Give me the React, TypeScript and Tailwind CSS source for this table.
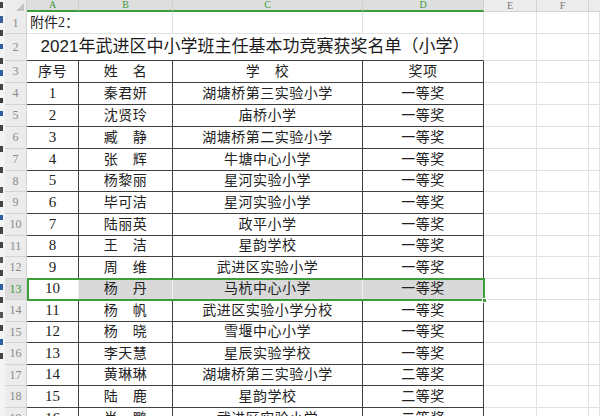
import React from "react";

type Row = { n: string; name: string; school: string; award: string; h: string };

const rows: Row[] = [
  { n: "1", name: "秦君妍", school: "湖塘桥第三实验小学", award: "一等奖", h: "h-[22px]" },
  { n: "2", name: "沈贤玲", school: "庙桥小学", award: "一等奖", h: "h-[22px]" },
  { n: "3", name: "臧　静", school: "湖塘桥第二实验小学", award: "一等奖", h: "h-[22px]" },
  { n: "4", name: "张　辉", school: "牛塘中心小学", award: "一等奖", h: "h-[22px]" },
  { n: "5", name: "杨黎丽", school: "星河实验小学", award: "一等奖", h: "h-[21px]" },
  { n: "6", name: "毕可洁", school: "星河实验小学", award: "一等奖", h: "h-[22px]" },
  { n: "7", name: "陆丽英", school: "政平小学", award: "一等奖", h: "h-[22px]" },
  { n: "8", name: "王　洁", school: "星韵学校", award: "一等奖", h: "h-[21px]" },
  { n: "9", name: "周　维", school: "武进区实验小学", award: "一等奖", h: "h-[22px]" },
  { n: "10", name: "杨　丹", school: "马杭中心小学", award: "一等奖", h: "h-[21px]" },
  { n: "11", name: "杨　帆", school: "武进区实验小学分校", award: "一等奖", h: "h-[22px]" },
  { n: "12", name: "杨　晓", school: "雪堰中心小学", award: "一等奖", h: "h-[21px]" },
  { n: "13", name: "李天慧", school: "星辰实验学校", award: "一等奖", h: "h-[22px]" },
  { n: "14", name: "黄琳琳", school: "湖塘桥第三实验小学", award: "二等奖", h: "h-[21px]" },
  { n: "15", name: "陆　鹿", school: "星韵学校", award: "二等奖", h: "h-[22px]" },
  { n: "16", name: "肖　鹏", school: "武进区实验小学", award: "二等奖", h: "h-[22px]" },
];

// fragments of another window's content peeking in at the far left edge
const strip = [
  "bg-[#444] h-[6px] mt-[2px]",
  "bg-[#3a5f99] h-[7px] mt-[8px]",
  "bg-[#444] h-[6px] mt-[7px]",
  "bg-[#2d5fa6] h-[5px] mt-[8px]",
  "bg-[#444] h-[6px] mt-[9px]",
  "bg-[#2d5fa6] h-[6px] mt-[6px]",
  "bg-[#444] h-[6px] mt-[8px]",
  "bg-[#3a3a3a] h-[5px] mt-[8px]",
  "bg-[#2d5fa6] h-[5px] mt-[8px]",
  "bg-[#444] h-[6px] mt-[9px]",
  "bg-[#444] h-[6px] mt-[15px]",
  "bg-[#444] h-[6px] mt-[15px]",
  "bg-[#555] h-[6px] mt-[14px]",
  "bg-[#444] h-[6px] mt-[8px]",
  "bg-[#2d5fa6] h-[5px] mt-[8px]",
  "bg-[#444] h-[7px] mt-[7px]",
  "bg-[#444] h-[6px] mt-[8px]",
  "bg-[#555] h-[6px] mt-[9px]",
  "bg-[#444] h-[6px] mt-[7px]",
  "bg-[#2d5fa6] h-[6px] mt-[8px]",
  "bg-[#444] h-[6px] mt-[7px]",
  "bg-[#555] h-[6px] mt-[9px]",
  "bg-[#444] h-[6px] mt-[7px]",
  "bg-[#2d5fa6] h-[6px] mt-[8px]",
  "bg-[#444] h-[6px] mt-[8px]",
];

const grid = "border-r border-b border-[#e1e1e1]";
const dark = "border-r border-b border-[#3f3f3f]";
const cellText = "flex items-center justify-center text-[14px] tracking-[0.5px] text-[#222]";
const numText = "flex items-center justify-center text-[15px] text-[#222]";

function RowHead({ n, active }: { n: string; active?: boolean }) {
  return (
    <div
      className={`w-[22px] shrink-0 flex items-center justify-center border-r border-b border-[#d3d3d3] text-[12px] font-['Liberation_Serif',serif] ${
        active ? "bg-[#dcdcdc] text-[#3c9d3c]" : "bg-[#ececec] text-[#8a8a8a]"
      }`}
    >
      {n}
    </div>
  );
}

function Empties() {
  return (
    <>
      <div className={`w-[53px] shrink-0 ${grid}`} />
      <div className={`w-[52px] shrink-0 ${grid}`} />
      <div className={`flex-1 ${grid}`} />
    </>
  );
}

export default function App() {
  return (
    <div className="w-[600px] h-[416px] overflow-hidden bg-white flex font-['Liberation_Serif','Noto_Sans_CJK_SC',serif]">
      <div className="w-[5px] shrink-0 bg-[#f4f4f4] flex flex-col items-start">
        {strip.map((s, i) => (
          <div key={i} className={`w-[3px] shrink-0 ${s}`} />
        ))}
      </div>

      <div className="flex-1 flex flex-col">
        {/* column headers */}
        <div className="flex h-[12px] text-[10px] leading-none">
          <div className="w-[22px] shrink-0 bg-[#ececec] border-r border-[#d3d3d3] flex items-end justify-end pr-[2px] pb-[1px]">
            <svg width="8" height="8" viewBox="0 0 8 8">
              <polygon points="8,0 8,8 0,8" fill="#c4c4c4" />
            </svg>
          </div>
          <div className="w-[52px] shrink-0 bg-[#dedede] border-r border-[#cfcfcf] border-b-2 border-b-[#3c9d3c] flex items-center justify-center text-[#3c9d3c]">A</div>
          <div className="w-[94px] shrink-0 bg-[#dedede] border-r border-[#cfcfcf] border-b-2 border-b-[#3c9d3c] flex items-center justify-center text-[#3c9d3c]">B</div>
          <div className="w-[190px] shrink-0 bg-[#dedede] border-r border-[#cfcfcf] border-b-2 border-b-[#3c9d3c] flex items-center justify-center text-[#3c9d3c]">C</div>
          <div className="w-[121px] shrink-0 bg-[#dedede] border-r border-[#cfcfcf] border-b-2 border-b-[#3c9d3c] flex items-center justify-center text-[#3c9d3c]">D</div>
          <div className="w-[53px] shrink-0 bg-[#ececec] border-r border-b border-[#d3d3d3] flex items-center justify-center text-[#7a7a7a]">E</div>
          <div className="w-[52px] shrink-0 bg-[#ececec] border-r border-b border-[#d3d3d3] flex items-center justify-center text-[#7a7a7a]">F</div>
          <div className="flex-1 bg-[#ececec] border-b border-[#d3d3d3]" />
        </div>

        {/* row 1 */}
        <div className="flex h-[22px]">
          <RowHead n="1" />
          <div className={`w-[146px] shrink-0 ${grid} flex items-center pl-[3px] text-[14px] text-[#222]`}>附件2：</div>
          <div className={`w-[190px] shrink-0 ${grid}`} />
          <div className={`w-[121px] shrink-0 ${grid}`} />
          <Empties />
        </div>

        {/* row 2 title */}
        <div className="flex h-[28px]">
          <RowHead n="2" />
          <div className="w-[457px] shrink-0 border-r border-r-[#e1e1e1] border-b border-b-[#3f3f3f] flex items-center justify-center text-[17px] text-[#1a1a1a] font-['Liberation_Sans','Noto_Sans_CJK_SC',sans-serif]">
            2021年武进区中小学班主任基本功竞赛获奖名单（小学）
          </div>
          <Empties />
        </div>

        {/* row 3 header */}
        <div className="flex h-[22px]">
          <RowHead n="3" />
          <div className={`w-[52px] shrink-0 ${dark} ${cellText}`}>序号</div>
          <div className={`w-[94px] shrink-0 ${dark} ${cellText}`}>姓　名</div>
          <div className={`w-[190px] shrink-0 ${dark} ${cellText}`}>学　校</div>
          <div className={`w-[121px] shrink-0 ${dark} ${cellText}`}>奖项</div>
          <Empties />
        </div>

        {rows.map((r, i) => {
          const rowNo = String(i + 4);
          const active = rowNo === "13";
          if (active) {
            return (
              <div key={i} className={`flex ${r.h} shrink-0`}>
                <RowHead n={rowNo} active />
                <div className="relative flex w-[457px] shrink-0">
                  <div className={`w-[52px] shrink-0 bg-white border-r border-b border-[#eeeeee] ${numText}`}>{r.n}</div>
                  <div className={`w-[94px] shrink-0 bg-[#d9d9d9] border-r border-b border-[#efefef] ${cellText}`}>{r.name}</div>
                  <div className={`w-[190px] shrink-0 bg-[#d9d9d9] border-r border-b border-[#efefef] ${cellText}`}>{r.school}</div>
                  <div className={`w-[121px] shrink-0 bg-[#d9d9d9] border-r border-b border-[#3f3f3f] ${cellText}`}>{r.award}</div>
                  <div className="absolute -top-[1px] left-0 w-[458px] h-[23px] border-2 border-[#3c9d3c] pointer-events-none" />
                  <div className="absolute -right-[3px] -bottom-[3px] w-[5px] h-[5px] bg-[#3c9d3c] border border-white" />
                </div>
                <Empties />
              </div>
            );
          }
          return (
            <div key={i} className={`flex ${r.h} shrink-0`}>
              <RowHead n={rowNo} />
              <div className={`w-[52px] shrink-0 ${dark} ${numText}`}>{r.n}</div>
              <div className={`w-[94px] shrink-0 ${dark} ${cellText}`}>{r.name}</div>
              <div className={`w-[190px] shrink-0 ${dark} ${cellText}`}>{r.school}</div>
              <div className={`w-[121px] shrink-0 ${dark} ${cellText}`}>{r.award}</div>
              <Empties />
            </div>
          );
        })}
      </div>
    </div>
  );
}
